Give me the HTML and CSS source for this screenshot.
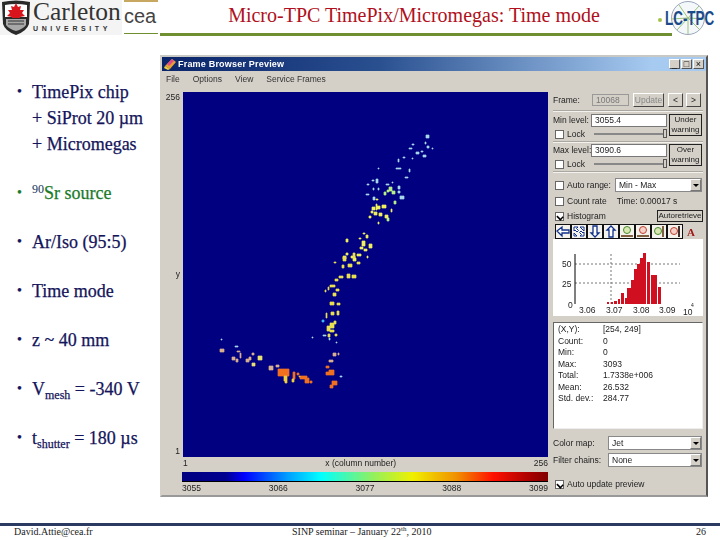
FILE: index.html
```html
<!DOCTYPE html>
<html lang="en">
<head>
<meta charset="utf-8">
<title>Micro-TPC TimePix/Micromegas: Time mode</title>
<link rel="stylesheet" href="styles.css">
</head>
<body>
<div class="slide">
  <header class="head">
    <div class="carleton">
      <svg class="shield" width="32" height="35" viewBox="0 0 32 35">
        <path d="M2 2 Q16 -1 30 2 L29 24 Q27 31 16 35 Q5 31 3 24Z" fill="#2a2a2a"/>
        <path d="M5 5 Q16 3 27 5 L27 17 L5 17Z" fill="#fff"/>
        <path d="M16 3 l2 4 3-1 -1 4 4 0 -2 3 3 3 -5 1 v1 h-8 v-1 l-5-1 3-3 -2-3 4 0 -1-4 3 1Z" fill="#d8141c"/>
        <path d="M6 19 H26 V25 Q23 29 16 31 Q9 29 6 25Z" fill="#a8a8a8"/>
        <path d="M8 21 H24 M8 24 H24" stroke="#333" stroke-width="1"/>
      </svg>
      <div class="wordmark">
        <div class="word-name">Carleton</div>
        <div class="word-sub">UNIVERSITY</div>
      </div>
    </div>
    <div class="cea"><span class="cea-text">cea</span></div>
    <div class="title-wrap">
      <h1 class="title">Micro-TPC TimePix/Micromegas: Time mode</h1>
    </div>
    <svg class="lctpc" width="60" height="36" viewBox="0 0 60 36">
      <circle cx="31" cy="18" r="16.5" fill="#f4f8fa" stroke="#9aa8bc" stroke-width="1"/>
      <path d="M31 18 L22 5 M31 18 L42 6 M31 18 L20 30 M31 18 L43 30 M31 18 L31 34 M31 18 L14 19 M31 18 L50 19" stroke="#9ec27a" stroke-width="1"/>
      <circle cx="3" cy="20" r="2" fill="#a4c24a"/>
      <text class="lctpc-text" transform="translate(8 25) scale(.64 1)">LC-TPC</text>
    </svg>
  </header>

  <main class="content">
    <ul class="bullets">
      <li class="bullet">TimePix chip<br>+ SiProt 20 µm<br>+ Micromegas</li>
      <li class="bullet green"><sup class="up">90</sup>Sr source</li>
      <li class="bullet">Ar/Iso (95:5)</li>
      <li class="bullet">Time mode</li>
      <li class="bullet">z ~ 40 mm</li>
      <li class="bullet">V<sub class="down">mesh</sub> = -340 V</li>
      <li class="bullet">t<sub class="down">shutter</sub> = 180 µs</li>
    </ul>

    <section class="window">
      <div class="titlebar">
        <svg width="13" height="12" viewBox="0 0 13 12"><path d="M1 8 L8 1 L12 4 L6 11Z" fill="#e8a030"/><path d="M3 6 L8 1 L10 3 L5 8Z" fill="#e04a8a"/><path d="M1 8 L6 11 L4 12 L0 10Z" fill="#f0d040"/></svg>
        <span class="titlebar-text">Frame Browser Preview</span>
        <span class="winbtns"><span class="winbtn">_</span><span class="winbtn">□</span><span class="winbtn">×</span></span>
      </div>
      <nav class="menu"><span>File</span><span>Options</span><span>View</span><span>Service Frames</span></nav>

      <div class="body">
        <div class="plot-col">
          <div class="plot-row">
            <div class="yaxis"><span>256</span><span>y</span><span>1</span></div>
            <svg class="plot" width="365" height="365" viewBox="183 92 365 365">
              <rect x="183" y="92" width="365" height="365" fill="#000080"/>
              <path class="pt" fill="#a8d8e8" stroke="#a8d8e8" d="M426 135h3v3h-3zM425 142h1v2h-1zM427 146h2v2h-2zM432 148h1v1h-1zM412 144h2v1h-2zM409 148h3v1h-3zM416 152h3v2h-3zM421 151h2v1h-2zM423 155h3v2h-3zM403 157h2v1h-2zM398 159h1v3h-1zM412 158h1v1h-1zM396 168h5v1h-5zM409 169h1v3h-1zM405 177h3v1h-3zM378 168h1v1h-1zM376 179h2v4h-2zM367 184h2v1h-2zM372 180h2v1h-2zM378 188h1v2h-1zM373 188h1v2h-1zM366 194h3v1h-3zM373 197h2v3h-2zM386 184h3v1h-3zM392 182h1v1h-1zM398 186h2v3h-2zM398 191h2v2h-2zM400 196h4v3h-4z"/>
              <path class="pt" fill="#b8f088" stroke="#b8f088" d="M389 187h3v4h-3zM392 191h3v3h-3zM384 192h2v3h-2zM387 190h2v2h-2zM394 201h2v3h-2zM387 218h2v3h-2z"/>
              <path class="pt" fill="#f0f060" stroke="#f0f060" d="M372 207h3v3h-3zM377 206h3v3h-3zM382 205h4v3h-4zM374 212h3v3h-3zM379 213h3v3h-3zM371 211h2v2h-2zM385 215h3v3h-3zM369 216h2v2h-2zM376 199h2v1h-2zM376 204h1v6h-1zM391 209h1v3h-1zM378 222h1v2h-1zM363 233h2v1h-2zM366 235h2v3h-2zM346 239h2v3h-2zM359 238h2v1h-2zM362 241h3v5h-3zM369 244h3v4h-3zM360 247h3v2h-3zM364 249h3v2h-3zM357 254h4v2h-4zM351 256h4v2h-4zM343 256h3v3h-3zM346 253h2v2h-2zM353 258h3v3h-3zM367 256h1v2h-1z"/>
              <path class="pt" fill="#e8e050" stroke="#e8e050" d="M343 257h3v4h-3zM353 253h2v5h-2zM357 262h3v2h-3zM348 264h4v3h-4zM342 265h2v3h-2zM334 262h2v1h-2zM347 274h3v4h-3zM352 275h4v3h-4zM339 276h4v2h-4zM335 279h3v2h-3zM330 285h5v2h-5zM328 287h1v3h-1zM325 290h1v2h-1zM336 289h3v2h-3zM333 293h3v3h-3zM330 302h4v3h-4zM337 303h3v2h-3zM326 313h1v5h-1zM331 312h3v3h-3zM337 311h2v4h-2zM330 323h4v5h-4zM327 326h3v5h-3zM334 321h2v3h-2zM330 330h4v2h-4zM328 334h2v3h-2zM335 334h2v2h-2z"/>
              <path class="pt" fill="#3cb8f0" stroke="#3cb8f0" d="M322 320h2v2h-2z"/>
              <path class="pt" fill="#a8d8e8" stroke="#a8d8e8" d="M221 339h1v1h-1zM312 337h1v1h-1zM235 346h3v1h-3zM323 335h3v1h-3zM336 342h1v1h-1zM329 338h1v2h-1zM340 376h2v1h-2z"/>
              <path class="pt" fill="#d8b090" stroke="#d8b090" d="M220 349h4v3h-4zM237 351h3v1h-3zM240 353h1v5h-1zM232 357h3v3h-3zM236 359h2v3h-2zM246 359h3v3h-3zM249 357h2v3h-2zM252 353h2v2h-2zM269 366h4v4h-4zM276 365h3v2h-3zM333 353h3v3h-3zM338 353h1v2h-1zM329 360h4v2h-4z"/>
              <path class="pt" fill="#e8e070" stroke="#e8e070" d="M258 356h4v4h-4zM252 363h3v3h-3z"/>
              <path class="pt" fill="#f07020" stroke="#f07020" d="M278 369h11v7h-11zM293 372h2v7h-2zM297 373h2v2h-2zM300 376h7v3h-7zM305 378h4v5h-4zM310 381h2v2h-2zM326 366h3v2h-3zM329 370h5v5h-5zM326 372h3v3h-3zM332 381h5v4h-5zM330 385h3v3h-3z"/>
              <path class="pt" fill="#f0d040" stroke="#f0d040" d="M284 376h3v5h-3zM285 381h2v2h-2zM292 379h2v3h-2zM299 376h1v1h-1z"/>
            </svg>
          </div>
          <div class="xaxis"><span>1</span><span>x (column number)</span><span>256</span></div>
          <div class="colorbar"></div>
          <div class="cb-labels"><span>3055</span><span>3066</span><span>3077</span><span>3088</span><span>3099</span></div>
        </div>

        <aside class="side">
          <div class="frame-row">
            <span class="frame-label">Frame:</span>
            <span class="spin">10068</span>
            <span class="btn wide dim">Update</span>
            <span class="btn small">&lt;</span>
            <span class="btn small">&gt;</span>
          </div>
          <div class="rule r1"></div>
          <div class="level">
            <span class="lab">Min level:</span><span class="input">3055.4</span>
            <span class="btn warn">Under<br>warning</span>
            <label class="check lock"><i class="box"></i>Lock</label>
            <span class="slider"><i class="knob"></i></span>
          </div>
          <div class="rule r2"></div>
          <div class="level">
            <span class="lab">Max level:</span><span class="input">3090.6</span>
            <span class="btn warn">Over<br>warning</span>
            <label class="check lock"><i class="box"></i>Lock</label>
            <span class="slider"><i class="knob"></i></span>
          </div>
          <div class="rule r3"></div>
          <div class="auto-row">
            <label class="check"><i class="box"></i>Auto range:</label>
            <span class="combo c-auto">Min - Max<i class="arrow"></i></span>
          </div>
          <div class="cool-row">
            <label class="check"><i class="box"></i>Count rate</label>
            <span>Time: 0.00017 s</span>
          </div>
          <div class="hist-row">
            <label class="check"><i class="box on"></i>Histogram</label>
            <span class="btn retrieve">Autoretrieve</span>
          </div>
          <div class="toolbar">
            <span class="tool"><svg width="14" height="13" viewBox="0 0 14 13"><path d="M1 6 L6 2 V5 H13 V8 H6 V11Z" fill="#fff" stroke="#10308a" stroke-width="1.3"/></svg></span>
            <span class="tool"><svg width="14" height="13" viewBox="0 0 14 13"><path d="M2 2 H6 L4.5 3.5 L6.5 5.5 L5 7 L3 5 L2 6Z M12 11 H8 L9.5 9.5 L7.5 7.5 L9 6 L11 8 L12 7Z M12 2 V6 L8 2Z M2 11 V8 L5 11Z" fill="#fff" stroke="#10308a"/></svg></span>
            <span class="tool"><svg width="14" height="13" viewBox="0 0 14 13"><path d="M7 12 L3 8 H5 V1 H9 V8 H11Z" fill="#fff" stroke="#10308a" stroke-width="1.3"/></svg></span>
            <span class="tool"><svg width="14" height="13" viewBox="0 0 14 13"><path d="M7 1 L3 5 H5 V12 H9 V5 H11Z" fill="#fff" stroke="#10308a" stroke-width="1.3"/></svg></span>
            <span class="tool"><svg width="14" height="13" viewBox="0 0 14 13"><circle cx="7" cy="5" r="3.5" fill="#d8e8b0" stroke="#4a8a30"/><path d="M1 11 H13" stroke="#806040" stroke-width="2"/></svg></span>
            <span class="tool"><svg width="14" height="13" viewBox="0 0 14 13"><circle cx="7" cy="5" r="3.5" fill="#f4d0c8" stroke="#c04030"/><path d="M1 11 H13" stroke="#806040" stroke-width="2"/></svg></span>
            <span class="tool"><svg width="14" height="13" viewBox="0 0 14 13"><circle cx="6" cy="6" r="3.5" fill="#d8e8b0" stroke="#4a8a30"/><path d="M11 1 V12" stroke="#806040" stroke-width="2"/></svg></span>
            <span class="tool"><svg width="14" height="13" viewBox="0 0 14 13"><circle cx="6" cy="6" r="3.5" fill="#f4d0c8" stroke="#c04030"/><path d="M11 1 V12" stroke="#403030" stroke-width="2"/></svg></span>
            <span class="tool flat"><span class="tool-a">A</span></span>
          </div>
          <svg class="hist" width="150" height="77" viewBox="553 240 150 77">
            <rect x="553" y="240" width="150" height="77" fill="#fff"/>
            <path d="M575 265H680M575 284H680M611 255V305M644 255V305" stroke="#777" stroke-width="1" stroke-dasharray="2 2" fill="none"/>
            <path d="M575 255V305" stroke="#000" stroke-width="1"/>
            <path fill="#d01020" d="M607 303h2v2h-2zM611 303h2v2h-2zM614 302h3v3h-3zM618 300h2v5h-2zM621 294h3v11h-3zM625 299h2v6h-2zM627 289h4v16h-4zM631 281h3v24h-3zM634 270h3v35h-3zM637 265h3v40h-3zM640 259h3v46h-3zM643 254h3v51h-3zM647 263h3v42h-3zM651 276h3v29h-3zM654 276h3v29h-3zM658 288h3v17h-3z"/>
            <text class="ht" x="562" y="268">50</text>
            <text class="ht" x="562" y="288">25</text>
            <text class="ht" x="568" y="309">0</text>
            <text class="ht" x="579" y="314">3.06</text>
            <text class="ht" x="606" y="314">3.07</text>
            <text class="ht" x="633" y="314">3.08</text>
            <text class="ht" x="659" y="314">3.09</text>
            <text class="ht" x="683" y="316">10</text>
            <text class="hs" x="691" y="308">4</text>
          </svg>
          <div class="info">
            <span>(X,Y):</span><span>[254, 249]</span>
            <span>Count:</span><span>0</span>
            <span>Min:</span><span>0</span>
            <span>Max:</span><span>3093</span>
            <span>Total:</span><span>1.7338e+006</span>
            <span>Mean:</span><span>26.532</span>
            <span>Std. dev.:</span><span>284.77</span>
          </div>
          <div class="combo-row first"><span>Color map:</span><span class="combo">Jet<i class="arrow"></i></span></div>
          <div class="combo-row"><span>Filter chains:</span><span class="combo">None<i class="arrow"></i></span></div>
          <label class="check update"><i class="box on"></i>Auto update preview</label>
        </aside>
      </div>
    </section>
  </main>

  <footer class="foot">
    <span class="foot-l">David.Attie@cea.fr</span>
    <span class="foot-c">SINP seminar – January 22<sup class="th">th</sup>, 2010</span>
    <span class="foot-r">26</span>
  </footer>
</div>
</body>
</html>
```

FILE: styles.css
```css
* { box-sizing: border-box; }
html, body { margin: 0; padding: 0; background: #fff; }
.slide {
  width: 720px; height: 540px; overflow: hidden; position: relative;
  display: flex; flex-direction: column;
  font-family: "Liberation Serif", serif; color: #14145a;
}

/* header */
.head { display: flex; height: 36px; align-items: flex-start; flex: none; }
.carleton { display: flex; width: 122px; height: 35px; background: #f4f4f4; gap: 1px; flex: none; }
.shield { flex: none; }
.wordmark { color: #333; }
.word-name { font-size: 25.5px; line-height: 24px; white-space: nowrap; }
.word-sub { font: bold 7px/9px "Liberation Sans", sans-serif; letter-spacing: 3.6px; color: #333; white-space: nowrap; }
.cea {
  width: 34px; height: 34px; margin-left: 2px; flex: none;
  border-top: 2px solid #c8a860; border-bottom: 1px solid #6f8f30;
}
.cea-text { display: block; font: 20px/24px "Liberation Sans", sans-serif; color: #444; margin-top: 2px; }
.title-wrap { width: 512px; margin-left: 2px; height: 36px; border-bottom: 3px solid #6f8f30; flex: none; text-align: center; }
.title { margin: 0; font-size: 20px; line-height: 30px; font-weight: normal; color: #b01020; padding-right: 4px; white-space: nowrap; }
.lctpc { margin-left: -15px; position: relative; flex: none; }
.lctpc-text { font: bold 21px "Liberation Sans", sans-serif; fill: #1a4a8a; }

/* content */
.content { display: flex; flex: none; height: 487px; }
.bullets { list-style: none; margin: 43px 0 0; padding: 0 0 0 32px; width: 160px; flex: none; font-size: 18px; line-height: 26px; -webkit-text-stroke: .25px currentColor; }
.bullet { position: relative; margin-bottom: 23px; white-space: nowrap; }
.bullet::before { content: "•"; position: absolute; left: -15px; font-size: 14px; }
.green { color: #1a7a2a; }
.up { font-size: 12px; line-height: 0; vertical-align: 6px; color: #14305a; -webkit-text-stroke: 0; }
.down { font-size: 12px; line-height: 0; vertical-align: -4px; }

/* application window */
.window {
  width: 548px; height: 442px; margin-top: 19px; background: #d4d0c8;
  border: 2px solid #c8c8c4; border-right-color: #555; border-bottom-color: #999; border-left-color: #d4d0c8;
  font: 8.5px/11px "Liberation Sans", sans-serif; color: #222; filter: blur(.3px);
}
.titlebar {
  height: 14px; display: flex; align-items: center; gap: 1px; padding: 0 2px;
  background: linear-gradient(90deg, #0a246a 0%, #2a5090 40%, #a6caf0 90%);
}
.titlebar-text { color: #fff; font-weight: bold; font-size: 9px; letter-spacing: .2px; }
.winbtns { margin-left: auto; display: flex; gap: 1px; }
.winbtn { width: 11px; height: 10px; background: #d4d0c8; border: 1px solid #555; border-top-color: #fff; border-left-color: #fff; color: #111; text-align: center; font-size: 9px; line-height: 8px; }
.menu { height: 14px; display: flex; gap: 13px; padding: 3px 4px 0; color: #333; }
.body { display: flex; gap: 5px; }

.plot-col { width: 386px; flex: none; }
.plot-row { display: flex; margin-top: 7px; }
.yaxis { width: 21px; height: 365px; display: flex; flex-direction: column; justify-content: space-between; align-items: flex-end; padding: 0 3px 0 0; }
.plot { display: block; flex: none; }
.pt { stroke-width: .7; }
.xaxis { margin: 0 0 0 21px; width: 365px; height: 15px; display: flex; justify-content: space-between; padding-top: 1px; }
.colorbar {
  margin-left: 20px; width: 366px; height: 10px; border-bottom: 1px solid #000;
  background: linear-gradient(90deg, #000080 0%, #000090 12%, #0000ff 17%, #00a0ff 29%, #00ffff 38%, #90f060 52%, #f0f000 63%, #f09000 75%, #ff1000 85%, #a00000 96%, #800000 100%);
}
.cb-labels { margin-left: 20px; width: 366px; display: flex; justify-content: space-between; padding-top: 1px; }

/* side panel */
.side { width: 150px; flex: none; }
.frame-row { display: flex; margin-top: 8px; height: 14px; align-items: center; }
.frame-label { width: 39px; flex: none; }
.btn {
  background: #d4d0c8; border: 1px solid #444; border-top-color: #fff; border-left-color: #fff;
  text-align: center; display: block;
}
.spin { width: 37px; height: 12px; border: 1px solid #999; color: #777; padding-left: 3px; line-height: 10px; margin-right: 4px; flex: none; }
.wide { width: 31px; height: 14px; line-height: 12px; margin-right: 4px; flex: none; }
.dim { color: #888; }
.small { width: 15px; height: 14px; line-height: 12px; margin-right: 3px; flex: none; }
.rule { height: 2px; background: #f4f2ee; border-top: 1px solid #aaa8a0; }
.r1 { margin-top: 3px; }
.r2 { margin-top: 1px; }
.r3 { margin-top: 1px; }
.level { display: grid; grid-template-columns: 38px 78px 33px; grid-template-rows: 13px 12px; row-gap: 1px; margin-top: 2px; height: 26px; }
.r2 + .level { margin-top: 1px; }
.lab { padding-top: 1px; white-space: nowrap; }
.input { background: #fff; border: 1px solid #777; padding-left: 3px; line-height: 11px; margin-right: 2px; }
.warn { grid-row: 1 / 3; grid-column: 3; height: 22px; line-height: 10px; font-size: 8px; background: #d4d0c8; border-color: #222; }
.check { display: flex; align-items: center; gap: 3px; white-space: nowrap; }
.box { width: 9px; height: 9px; background: #fff; border: 1px solid #666; display: block; flex: none; position: relative; }
.box.on::after { content: ""; position: absolute; left: 1px; top: 0; width: 4px; height: 6px; border: solid #000; border-width: 0 0 2px 2px; transform: rotate(-45deg) scale(.8, .7); }
.lock { padding-left: 2px; }
.slider { height: 2px; margin: 5px 2px 0 3px; grid-column: 2; background: #888; position: relative; }
.knob { position: absolute; right: 0; top: -4px; width: 4px; height: 9px; background: #d4d0c8; border: 1px solid #555; display: block; }
.level .lock { grid-column: 1; grid-row: 2; }
.auto-row { display: flex; justify-content: space-between; align-items: center; margin-top: 5px; height: 14px; padding-left: 2px; }
.combo { display: block; position: relative; height: 14px; background: #fff; border: 1px solid #888; padding-left: 3px; line-height: 12px; }
.c-auto { width: 87px; margin-right: 1px; }
.arrow { position: absolute; right: 0; top: 0; width: 11px; height: 12px; background: #d4d0c8; border: 1px solid #777; border-top-color: #fff; border-left-color: #fff; }
.arrow::after { content: ""; position: absolute; left: 2px; top: 4px; border: 3px solid transparent; border-top: 3px solid #000; border-bottom: 0; }
.cool-row { display: flex; gap: 10px; height: 14px; align-items: center; margin-top: 2px; padding-left: 2px; }
.hist-row { display: flex; justify-content: space-between; align-items: center; height: 12px; margin-top: 2px; padding-left: 2px; }
.retrieve { width: 46px; height: 12px; font-size: 8px; line-height: 10px; border-color: #222; white-space: nowrap; }
.toolbar { display: flex; height: 15px; margin-top: 2px; padding-left: 2px; background: #d4d0c8; }
.tool { width: 16px; height: 15px; background: #f4f2ec; border: 1px solid #111; display: flex; align-items: center; justify-content: center; flex: none; }
.tool.flat { border: 0; background: #d4d0c8; }
.tool-a { color: #a01818; font: bold 11px "Liberation Serif", serif; }
.hist { display: block; }
.ht { font: 8.5px "Liberation Sans", sans-serif; fill: #222; }
.hs { font: 5px "Liberation Sans", sans-serif; fill: #222; }
.info {
  margin-top: 6px; height: 107px; background: #fff; border: 1px solid #666; border-right-color: #eee; border-bottom-color: #eee;
  padding: 1px 0 0 4px; display: grid; grid-template-columns: 45px 1fr; grid-auto-rows: 11.5px; align-content: start;
}
.combo-row { display: grid; grid-template-columns: 55px 1fr; align-items: center; margin-top: 3px; padding-right: 1px; }
.combo-row.first { margin-top: 7px; }
.update { margin-top: 12px; padding-left: 2px; }

/* footer */
.foot {
  flex: none; border-top: 3px solid #2a3a60; height: 17px;
  display: flex; font-size: 10px; line-height: 12px; color: #222;
}
.foot-l { margin-left: 14px; width: 278px; flex: none; }
.foot-c { width: 404px; flex: none; }
.foot-r { width: 14px; }
.th { font-size: 7px; line-height: 0; }
```
